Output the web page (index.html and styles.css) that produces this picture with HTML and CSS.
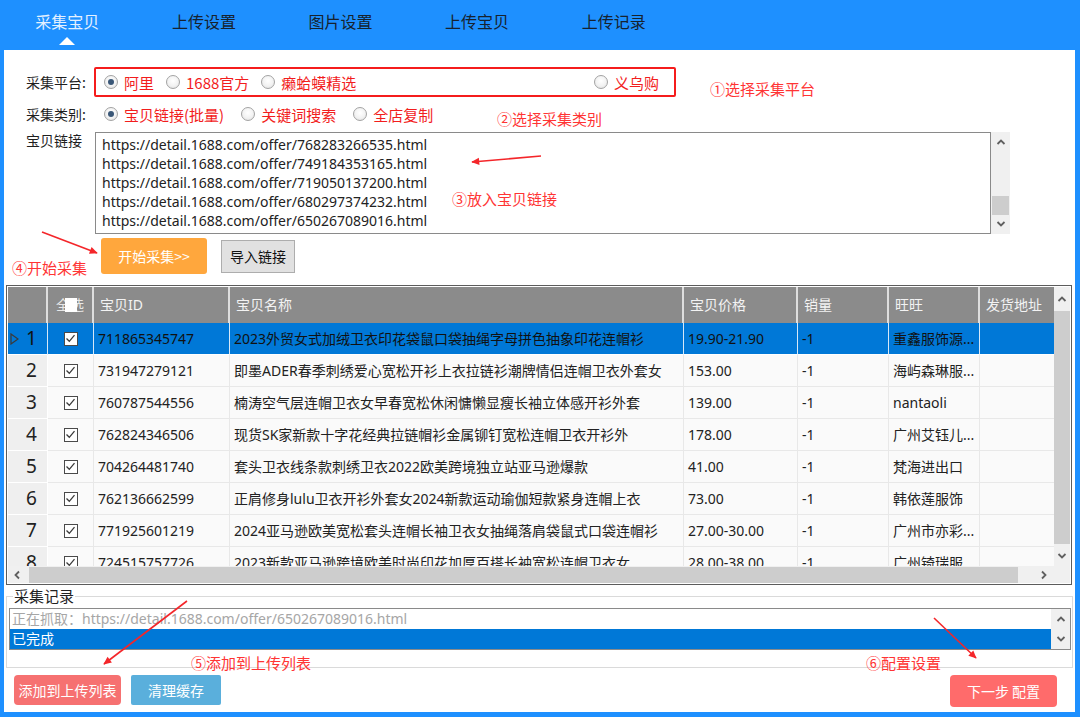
FILE: index.html
```html
<!DOCTYPE html>
<html lang="zh-CN">
<head>
<meta charset="utf-8">
<title>采集宝贝</title>
<link rel="stylesheet" href="styles.css">
</head>
<body>
<div class="app">
  <nav class="tabs">
    <div class="tab active">采集宝贝</div>
    <div class="tab">上传设置</div>
    <div class="tab">图片设置</div>
    <div class="tab">上传宝贝</div>
    <div class="tab">上传记录</div>
  </nav>

  <main class="panel">
    <div class="form-row platform-row">
      <span class="field-label">采集平台:</span>
      <div class="platform-box">
        <label class="radio checked"><span class="dot"></span>阿里</label>
        <label class="radio"><span class="dot"></span>1688官方</label>
        <label class="radio"><span class="dot"></span>癞蛤蟆精选</label>
        <label class="radio push-right"><span class="dot"></span>义乌购</label>
      </div>
    </div>

    <div class="form-row category-row">
      <span class="field-label">采集类别:</span>
      <div class="radio-group">
        <label class="radio checked"><span class="dot"></span>宝贝链接(批量)</label>
        <label class="radio"><span class="dot"></span>关键词搜索</label>
        <label class="radio"><span class="dot"></span>全店复制</label>
      </div>
    </div>

    <div class="links-row">
      <span class="field-label">宝贝链接</span>
      <div class="textbox">
        <div class="textbox-lines">
          <div>https://detail.1688.com/offer/768283266535.html</div>
          <div>https://detail.1688.com/offer/749184353165.html</div>
          <div>https://detail.1688.com/offer/719050137200.html</div>
          <div>https://detail.1688.com/offer/680297374232.html</div>
          <div>https://detail.1688.com/offer/650267089016.html</div>
        </div>
        <div class="vscroll text-scroll">
          <svg class="chev" width="10" height="8" viewBox="0 0 10 8"><polyline points="1.5,6 5,2.5 8.5,6" /></svg>
          <div class="text-thumb"></div>
          <svg class="chev" width="10" height="8" viewBox="0 0 10 8"><polyline points="1.5,2 5,5.5 8.5,2" /></svg>
        </div>
      </div>
    </div>

    <div class="action-row">
      <button class="btn btn-start">开始采集&gt;&gt;</button>
      <button class="btn btn-import">导入链接</button>
    </div>

    <div class="grid">
      <div class="viewport">
        <div class="grid-row grid-head">
          <div class="hcell"></div>
          <div class="hcell hcheck"><span class="hcheck-text">全选</span><span class="hcheck-box"></span></div>
          <div class="hcell">宝贝ID</div>
          <div class="hcell">宝贝名称</div>
          <div class="hcell">宝贝价格</div>
          <div class="hcell">销量</div>
          <div class="hcell">旺旺</div>
          <div class="hcell last">发货地址</div>
        </div>

        <div class="grid-row selected">
          <div class="cell rowhead"><svg class="row-marker" width="9" height="12" viewBox="0 0 9 12"><polygon points="1,1 8,6 1,11" /></svg>1</div>
          <div class="cell check"><span class="checkbox"><svg width="11" height="11" viewBox="0 0 11 11"><polyline points="1.5,5.5 4.3,8.3 9.5,2.2" /></svg></span></div>
          <div class="cell">711865345747</div>
          <div class="cell">2023外贸女式加绒卫衣印花袋鼠口袋抽绳字母拼色抽象印花连帽衫</div>
          <div class="cell">19.90-21.90</div>
          <div class="cell">-1</div>
          <div class="cell">重鑫服饰源...</div>
          <div class="cell last"></div>
        </div>
        <div class="grid-row">
          <div class="cell rowhead">2</div>
          <div class="cell check"><span class="checkbox"><svg width="11" height="11" viewBox="0 0 11 11"><polyline points="1.5,5.5 4.3,8.3 9.5,2.2" /></svg></span></div>
          <div class="cell">731947279121</div>
          <div class="cell">即墨ADER春季刺绣爱心宽松开衫上衣拉链衫潮牌情侣连帽卫衣外套女</div>
          <div class="cell">153.00</div>
          <div class="cell">-1</div>
          <div class="cell">海屿森琳服...</div>
          <div class="cell last"></div>
        </div>
        <div class="grid-row">
          <div class="cell rowhead">3</div>
          <div class="cell check"><span class="checkbox"><svg width="11" height="11" viewBox="0 0 11 11"><polyline points="1.5,5.5 4.3,8.3 9.5,2.2" /></svg></span></div>
          <div class="cell">760787544556</div>
          <div class="cell">楠涛空气层连帽卫衣女早春宽松休闲慵懒显瘦长袖立体感开衫外套</div>
          <div class="cell">139.00</div>
          <div class="cell">-1</div>
          <div class="cell">nantaoli</div>
          <div class="cell last"></div>
        </div>
        <div class="grid-row">
          <div class="cell rowhead">4</div>
          <div class="cell check"><span class="checkbox"><svg width="11" height="11" viewBox="0 0 11 11"><polyline points="1.5,5.5 4.3,8.3 9.5,2.2" /></svg></span></div>
          <div class="cell">762824346506</div>
          <div class="cell">现货SK家新款十字花经典拉链帽衫金属铆钉宽松连帽卫衣开衫外</div>
          <div class="cell">178.00</div>
          <div class="cell">-1</div>
          <div class="cell">广州艾钰儿...</div>
          <div class="cell last"></div>
        </div>
        <div class="grid-row">
          <div class="cell rowhead">5</div>
          <div class="cell check"><span class="checkbox"><svg width="11" height="11" viewBox="0 0 11 11"><polyline points="1.5,5.5 4.3,8.3 9.5,2.2" /></svg></span></div>
          <div class="cell">704264481740</div>
          <div class="cell">套头卫衣线条款刺绣卫衣2022欧美跨境独立站亚马逊爆款</div>
          <div class="cell">41.00</div>
          <div class="cell">-1</div>
          <div class="cell">梵海进出口</div>
          <div class="cell last"></div>
        </div>
        <div class="grid-row">
          <div class="cell rowhead">6</div>
          <div class="cell check"><span class="checkbox"><svg width="11" height="11" viewBox="0 0 11 11"><polyline points="1.5,5.5 4.3,8.3 9.5,2.2" /></svg></span></div>
          <div class="cell">762136662599</div>
          <div class="cell">正肩修身lulu卫衣开衫外套女2024新款运动瑜伽短款紧身连帽上衣</div>
          <div class="cell">73.00</div>
          <div class="cell">-1</div>
          <div class="cell">韩依莲服饰</div>
          <div class="cell last"></div>
        </div>
        <div class="grid-row">
          <div class="cell rowhead">7</div>
          <div class="cell check"><span class="checkbox"><svg width="11" height="11" viewBox="0 0 11 11"><polyline points="1.5,5.5 4.3,8.3 9.5,2.2" /></svg></span></div>
          <div class="cell">771925601219</div>
          <div class="cell">2024亚马逊欧美宽松套头连帽长袖卫衣女抽绳落肩袋鼠式口袋连帽衫</div>
          <div class="cell">27.00-30.00</div>
          <div class="cell">-1</div>
          <div class="cell">广州市亦彩...</div>
          <div class="cell last"></div>
        </div>
        <div class="grid-row">
          <div class="cell rowhead">8</div>
          <div class="cell check"><span class="checkbox"><svg width="11" height="11" viewBox="0 0 11 11"><polyline points="1.5,5.5 4.3,8.3 9.5,2.2" /></svg></span></div>
          <div class="cell">724515757726</div>
          <div class="cell">2023新款亚马逊跨境欧美时尚印花加厚百搭长袖宽松连帽卫衣女</div>
          <div class="cell">28.00-38.00</div>
          <div class="cell">-1</div>
          <div class="cell">广州锜瑞服...</div>
          <div class="cell last"></div>
        </div>
      </div>

      <div class="vscroll grid-vscroll">
        <svg class="chev" width="10" height="8" viewBox="0 0 10 8"><polyline points="1.5,6 5,2.5 8.5,6" /></svg>
        <div class="grid-vthumb"></div>
        <svg class="chev" width="10" height="8" viewBox="0 0 10 8"><polyline points="1.5,2 5,5.5 8.5,2" /></svg>
      </div>
      <div class="hscroll">
        <svg class="chev" width="8" height="10" viewBox="0 0 8 10"><polyline points="6,1.5 2.5,5 6,8.5" /></svg>
        <div class="grid-hthumb"></div>
        <svg class="chev" width="8" height="10" viewBox="0 0 8 10"><polyline points="2,1.5 5.5,5 2,8.5" /></svg>
      </div>
      <div class="corner"></div>
    </div>

    <fieldset class="log">
      <legend>采集记录</legend>
      <div class="listbox">
        <div class="list-items">
          <div class="list-item muted">正在抓取：https://detail.1688.com/offer/650267089016.html</div>
          <div class="list-item active">已完成</div>
        </div>
        <div class="vscroll list-scroll">
          <svg class="chev" width="10" height="8" viewBox="0 0 10 8"><polyline points="1.5,6 5,2.5 8.5,6" /></svg>
          <svg class="chev" width="10" height="8" viewBox="0 0 10 8"><polyline points="1.5,2 5,5.5 8.5,2" /></svg>
        </div>
      </div>
    </fieldset>

    <div class="bottom-row">
      <button class="btn btn-add">添加到上传列表</button>
      <button class="btn btn-clear">清理缓存</button>
      <button class="btn btn-next">下一步 配置</button>
    </div>
  </main>

  <div class="callout c1">①选择采集平台</div>
  <div class="callout c2">②选择采集类别</div>
  <div class="callout c3">③放入宝贝链接</div>
  <div class="callout c4">④开始采集</div>
  <div class="callout c5">⑤添加到上传列表</div>
  <div class="callout c6">⑥配置设置</div>

  <svg class="arrows" width="1080" height="717" viewBox="0 0 1080 717">
    <defs>
      <marker id="ah" viewBox="0 0 10 10" refX="9" refY="5" markerWidth="6" markerHeight="5" orient="auto">
        <path d="M0 0.5 L10 5 L0 9.5 z" fill="#f4262a"/>
      </marker>
    </defs>
    <line x1="541" y1="156" x2="472" y2="162" marker-end="url(#ah)"/>
    <line x1="42" y1="232" x2="97" y2="253" marker-end="url(#ah)"/>
    <line x1="187" y1="601" x2="104" y2="664" marker-end="url(#ah)"/>
    <line x1="934" y1="618" x2="976" y2="658" marker-end="url(#ah)"/>
  </svg>
</div>
</body>
</html>
```

FILE: styles.css
```css
* { box-sizing: border-box; }

body {
  margin: 0;
  background: #1e90ff;
  font-family: "Noto Sans", "Noto Sans CJK SC", sans-serif;
  color: #222;
}

.app {
  position: relative;
  width: 1080px;
  height: 717px;
  overflow: hidden;
  background: #1e90ff;
}

/* ---------- tabs ---------- */
.tabs {
  display: flex;
  height: 50px;
  margin-left: -1px;
}
.tab {
  position: relative;
  width: 136.6px;
  text-align: center;
  font-family: "Noto Sans CJK SC", sans-serif;
  font-size: 16px;
  line-height: 42px;
  color: #17222e;
}
.tab.active { color: #e4f1ff; }
.tab.active::after {
  content: "";
  position: absolute;
  left: 50%;
  top: 37px;
  margin-left: -8px;
  border-left: 8px solid transparent;
  border-right: 8px solid transparent;
  border-bottom: 8px solid #fff;
}

/* ---------- panel ---------- */
.panel {
  display: flex;
  flex-direction: column;
  margin: 0 5px 0 4px;
  height: 662px;
  padding-top: 17px;
  background: #fff;
}

.form-row {
  display: flex;
  align-items: center;
  padding-left: 22px;
}
.field-label {
  font-family: "Noto Sans CJK SC", sans-serif;
  font-size: 14px;
  color: #1f1f1f;
  width: 68px;
  flex: none;
}

.platform-row { height: 30px; }
.platform-box {
  display: flex;
  align-items: center;
  width: 582px;
  height: 30px;
  border: 2px solid #f51c1c;
  border-radius: 2px;
  padding: 0 15px 0 8px;
}

.category-row {
  height: 20px;
  margin-top: 7px;
}
.radio-group {
  display: flex;
  align-items: center;
  padding-left: 10px;
}

.radio {
  display: inline-flex;
  align-items: center;
  gap: 6px;
  margin-right: 12px;
  font-family: "Noto Sans CJK SC", sans-serif;
  font-size: 15px;
  color: #f21d1d;
  white-space: nowrap;
}
.radio-group .radio { margin-right: 17px; }
.radio.push-right { margin-left: auto; margin-right: 0; }
.dot {
  position: relative;
  width: 14px;
  height: 14px;
  border-radius: 50%;
  border: 1px solid #a3a3a3;
  background: radial-gradient(circle at 50% 40%, #ffffff 0%, #f2f2f2 55%, #dcdcdc 100%);
  flex: none;
}
.radio.checked .dot::after {
  content: "";
  position: absolute;
  left: 3px;
  top: 3px;
  width: 6px;
  height: 6px;
  border-radius: 50%;
  background: #3a5777;
}

/* ---------- links textbox ---------- */
.links-row {
  display: flex;
  margin-top: 8px;
  padding-left: 22px;
}
.links-row .field-label {
  width: 69px;
  line-height: 16px;
  padding-top: 0;
}
.textbox {
  display: flex;
  height: 102px;
}
.textbox-lines {
  width: 896px;
  height: 102px;
  border: 1px solid #8a8a8a;
  padding: 2px 6px;
  font-size: 14px;
  line-height: 19px;
  color: #222;
}
.vscroll {
  display: flex;
  flex-direction: column;
  align-items: center;
  background: #f0f0f0;
}
.chev {
  flex: none;
  fill: none;
  stroke: #606060;
  stroke-width: 1.8;
}
.text-scroll {
  width: 19px;
  height: 102px;
  padding-top: 6px;
  padding-bottom: 6px;
}
.text-thumb {
  width: 17px;
  height: 19px;
  margin-top: auto;
  margin-bottom: 5px;
  background: #cdcdcd;
}

/* ---------- buttons ---------- */
.action-row {
  display: flex;
  align-items: center;
  height: 36px;
  margin-top: 4px;
  padding-left: 97px;
}
.btn {
  font-family: "Noto Sans CJK SC", sans-serif;
  font-size: 14px;
  border: none;
  padding: 0;
  cursor: pointer;
}
.btn-start {
  width: 106px;
  height: 36px;
  border-radius: 3px;
  background: #ffa73d;
  color: #fff;
}
.btn-import {
  width: 74px;
  height: 33px;
  margin-left: 14px;
  background: #e1e1e1;
  border: 1px solid #adadad;
  color: #111;
}

/* ---------- data grid ---------- */
.grid {
  display: grid;
  grid-template-columns: 1046px 1fr;
  grid-template-rows: 1fr 17px;
  height: 300px;
  margin: 11px 3px 0 2px;
  border: 1px solid #5c5c5c;
  padding: 1px;
  background: #fff;
}
.viewport {
  overflow: hidden;
  background: #fff;
}
.grid-row {
  display: grid;
  grid-template-columns: 40px 46px 136px 454px 114px 91px 91px 74px;
  height: 32px;
}
.grid-head { height: 36px; }
.hcell {
  position: relative;
  background: #8b8b8b;
  color: #f3f3f3;
  font-size: 14px;
  line-height: 36px;
  padding-left: 6px;
  border-right: 2px solid #dedede;
  white-space: nowrap;
  overflow: hidden;
}
.hcell.last { border-right: none; }
.hcheck {
  display: flex;
  justify-content: center;
  padding-left: 0;
}
.hcheck-text { color: #e8e8e8; }
.hcheck-box {
  position: absolute;
  left: 17px;
  top: 11px;
  width: 12px;
  height: 14px;
  background: #fff;
}

.cell {
  position: relative;
  background: #fafafa;
  border-right: 1px solid #e8e8e8;
  border-bottom: 1px solid #e8e8e8;
  font-size: 14px;
  line-height: 31px;
  padding-left: 4px;
  color: #222;
  white-space: nowrap;
  overflow: hidden;
}
.cell.last { border-right: none; }
.rowhead {
  background: #efefef;
  border-right: 1px solid #fff;
  border-bottom: 1px solid #fff;
  font-size: 19px;
  text-align: center;
  padding-left: 8px;
  color: #222;
}
.row-marker {
  position: absolute;
  left: 2px;
  top: 10px;
  fill: none;
  stroke: #3a3a3a;
  stroke-width: 1.2;
}
.check {
  display: flex;
  align-items: center;
  justify-content: center;
  padding-left: 0;
}
.checkbox {
  display: flex;
  align-items: center;
  justify-content: center;
  width: 14px;
  height: 14px;
  border: 1px solid #4a4a4a;
  background: #fff;
}
.checkbox svg {
  fill: none;
  stroke: #3a3a3a;
  stroke-width: 1.3;
}
.selected .cell {
  background: #0078d7;
  border-right-color: #d6e8f8;
  border-bottom-color: #ffffff;
  color: #111;
}
.selected .cell.last { border-right: none; }

.grid-vscroll {
  padding-top: 8px;
  padding-bottom: 6px;
}
.grid-vthumb {
  width: 16px;
  flex: 1;
  margin: 8px 0 8px;
  background: #cdcdcd;
}
.hscroll {
  display: flex;
  align-items: center;
  background: #f0f0f0;
  padding: 0 6px 0 5px;
}
.grid-hthumb {
  flex: 1;
  height: 16px;
  margin: 0 22px 0 8px;
  background: #cdcdcd;
}
.corner { background: #f0f0f0; }

/* ---------- log ---------- */
.log {
  margin: 1px 2px 0 2px;
  padding: 0 1px 17px 2px;
  border: 1px solid #dadada;
  min-width: 0;
}
.log legend {
  font-family: "Noto Sans CJK SC", sans-serif;
  font-size: 15px;
  line-height: 20px;
  color: #222;
  padding: 0 1px;
  margin-left: 4px;
}
.listbox {
  display: flex;
  height: 42px;
  margin-top: 2px;
  border: 1px solid #8a8a8a;
}
.list-items { flex: 1; }
.list-item {
  height: 20px;
  font-size: 14px;
  line-height: 20px;
  padding-left: 2px;
  white-space: nowrap;
}
.list-item.muted { color: #a6a6a6; }
.list-item.active { background: #0078d7; color: #fff; }
.list-scroll {
  width: 19px;
  justify-content: space-between;
  padding: 6px 0 6px;
}

/* ---------- bottom buttons ---------- */
.bottom-row {
  display: flex;
  align-items: flex-start;
  margin-top: 7px;
  padding: 0 18px 0 10px;
}
.btn-add {
  width: 107px;
  height: 30px;
  border-radius: 4px;
  background: #f67171;
  color: #fff;
}
.btn-clear {
  width: 90px;
  height: 30px;
  margin-left: 10px;
  border-radius: 2px;
  background: #5aafdc;
  color: #fff;
}
.btn-next {
  width: 107px;
  height: 32px;
  margin-left: auto;
  border-radius: 4px;
  background: #ff6b6b;
  color: #fff;
}

/* ---------- annotations ---------- */
.callout {
  position: absolute;
  font-family: "Noto Sans CJK SC", sans-serif;
  font-size: 15px;
  line-height: 20px;
  color: #ff3434;
  white-space: nowrap;
}
.c1 { left: 710px; top: 79px; }
.c2 { left: 497px; top: 109px; }
.c3 { left: 452px; top: 189px; }
.c4 { left: 12px; top: 258px; }
.c5 { left: 191px; top: 653px; }
.c6 { left: 866px; top: 653px; }

.arrows {
  position: absolute;
  left: 0;
  top: 0;
  pointer-events: none;
}
.arrows line {
  stroke: #f4262a;
  stroke-width: 1.6;
}
```
